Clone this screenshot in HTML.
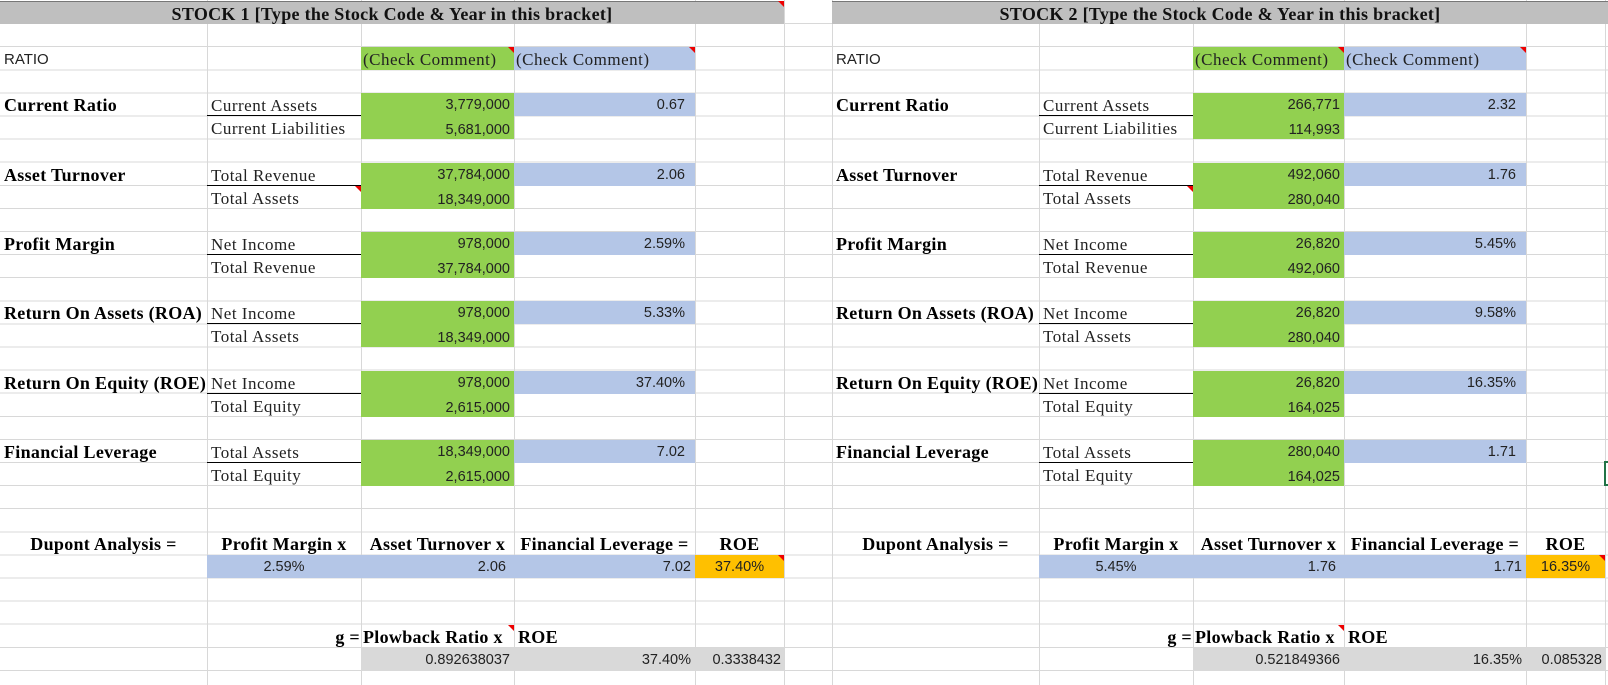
<!DOCTYPE html>
<html><head><meta charset="utf-8"><style>
*{margin:0;padding:0;box-sizing:border-box}
body{width:1608px;height:685px;overflow:hidden;background:#fff;position:relative;font-family:"Liberation Sans",sans-serif;font-size:14.5px;color:#222}
.grid{position:absolute;left:0;top:1px;width:1608px;height:684px;background:repeating-linear-gradient(to bottom,transparent 0,transparent 22.1px,#d8d8d8 22.1px,#d8d8d8 23.1px)}
.v{position:absolute;top:0;width:1px;height:685px;background:#d8d8d8}
.s{position:absolute;top:0;height:685px}
.c{position:absolute;height:23px;line-height:25px;padding:0 4px;white-space:nowrap;overflow:visible}
.sf{font-family:"Liberation Serif",serif;font-size:17px;letter-spacing:0.5px}
.b{font-family:"Liberation Serif",serif;font-size:18px;letter-spacing:0.3px;font-weight:bold;color:#000}
.r{text-align:right}.ctr{text-align:center}
.g{background:#92d050}.bl{background:#b4c6e7}.o{background:#ffc000}.gr{background:#d9d9d9}
.ul{border-bottom:1px solid #000}
.t{position:absolute;width:0;height:0;border-top:6px solid #e00;border-left:6px solid transparent}
.title{position:absolute;top:1px;height:23px;background:#bfbfbf;border-top:1px solid #777;text-align:center;font-family:"Liberation Serif",serif;font-weight:bold;font-size:18px;letter-spacing:0.3px;line-height:24px;color:#111}
</style></head><body>
<div class="grid"></div>
<div class="v" style="left:207px"></div><div class="v" style="left:361px"></div><div class="v" style="left:514px"></div><div class="v" style="left:695px"></div><div class="v" style="left:784px"></div><div class="v" style="left:832px"></div><div class="v" style="left:1039px"></div><div class="v" style="left:1193px"></div><div class="v" style="left:1344px"></div><div class="v" style="left:1526px"></div><div class="v" style="left:1605px"></div>

<div class="title" style="left:0;width:784px">STOCK 1 [Type the Stock Code &amp; Year in this bracket]</div>
<div class="t" style="left:778px;top:1px"></div>
<div class="title" style="left:832px;width:776px">STOCK 2 [Type the Stock Code &amp; Year in this bracket]</div>

<!-- LEFT -->
<div class="s" style="left:0;width:784px">
<div class="c" style="left:0;top:47px;font-size:15px">RATIO</div>
<div class="c g sf" style="left:361px;top:47px;width:153px;padding-left:2px">(Check Comment)</div>
<div class="c bl sf" style="left:514px;top:47px;width:181px;padding-left:2px">(Check Comment)</div>
<div class="t" style="left:508px;top:47px"></div><div class="t" style="left:689px;top:47px"></div>

<div class="c b" style="left:0;top:93px">Current Ratio</div>
<div class="c sf ul" style="left:207px;top:93px;width:154px">Current Assets</div>
<div class="c sf" style="left:207px;top:116px">Current Liabilities</div>
<div class="c g r" style="left:361px;top:93px;width:153px;height:46px">3,779,000<br>5,681,000</div>
<div class="c bl r" style="left:514px;top:93px;width:181px;padding-right:10px">0.67</div>

<div class="c b" style="left:0;top:163px">Asset Turnover</div>
<div class="c sf ul" style="left:207px;top:163px;width:154px">Total Revenue</div>
<div class="c sf" style="left:207px;top:186px">Total Assets</div>
<div class="t" style="left:355px;top:186px"></div>
<div class="c g r" style="left:361px;top:163px;width:153px;height:46px">37,784,000<br>18,349,000</div>
<div class="c bl r" style="left:514px;top:163px;width:181px;padding-right:10px">2.06</div>

<div class="c b" style="left:0;top:232px">Profit Margin</div>
<div class="c sf ul" style="left:207px;top:232px;width:154px">Net Income</div>
<div class="c sf" style="left:207px;top:255px">Total Revenue</div>
<div class="c g r" style="left:361px;top:232px;width:153px;height:46px">978,000<br>37,784,000</div>
<div class="c bl r" style="left:514px;top:232px;width:181px;padding-right:10px">2.59%</div>

<div class="c b" style="left:0;top:301px">Return On Assets (ROA)</div>
<div class="c sf ul" style="left:207px;top:301px;width:154px">Net Income</div>
<div class="c sf" style="left:207px;top:324px">Total Assets</div>
<div class="c g r" style="left:361px;top:301px;width:153px;height:46px">978,000<br>18,349,000</div>
<div class="c bl r" style="left:514px;top:301px;width:181px;padding-right:10px">5.33%</div>

<div class="c b" style="left:0;top:371px">Return On Equity (ROE)</div>
<div class="c sf ul" style="left:207px;top:371px;width:154px">Net Income</div>
<div class="c sf" style="left:207px;top:394px">Total Equity</div>
<div class="c g r" style="left:361px;top:371px;width:153px;height:46px">978,000<br>2,615,000</div>
<div class="c bl r" style="left:514px;top:371px;width:181px;padding-right:10px">37.40%</div>

<div class="c b" style="left:0;top:440px">Financial Leverage</div>
<div class="c sf ul" style="left:207px;top:440px;width:154px">Total Assets</div>
<div class="c sf" style="left:207px;top:463px">Total Equity</div>
<div class="c g r" style="left:361px;top:440px;width:153px;height:46px">18,349,000<br>2,615,000</div>
<div class="c bl r" style="left:514px;top:440px;width:181px;padding-right:10px">7.02</div>

<div class="c b ctr" style="left:0;top:532px;width:207px">Dupont Analysis =</div>
<div class="c b ctr" style="left:207px;top:532px;width:154px">Profit Margin x</div>
<div class="c b ctr" style="left:361px;top:532px;width:153px">Asset Turnover x</div>
<div class="c b ctr" style="left:514px;top:532px;width:181px">Financial Leverage =</div>
<div class="c b ctr" style="left:695px;top:532px;width:89px">ROE</div>
<div class="c bl ctr" style="left:207px;top:555px;width:154px">2.59%</div>
<div class="c bl r" style="left:361px;top:555px;width:153px;padding-right:8px">2.06</div>
<div class="c bl r" style="left:514px;top:555px;width:181px">7.02</div>
<div class="c o ctr" style="left:695px;top:555px;width:89px">37.40%</div>
<div class="t" style="left:778px;top:555px"></div>

<div class="c b r" style="left:207px;top:625px;width:154px;padding-right:1px">g =</div>
<div class="c b" style="left:361px;top:625px;width:153px;padding-left:2px">Plowback Ratio x</div>
<div class="t" style="left:508px;top:625px"></div>
<div class="c b" style="left:514px;top:625px">ROE</div>
<div class="c gr r" style="left:361px;top:648px;width:153px">0.892638037</div>
<div class="c gr r" style="left:514px;top:648px;width:181px">37.40%</div>
<div class="c gr r" style="left:695px;top:648px;width:89px;padding-right:3px">0.3338432</div>
</div>

<!-- RIGHT -->
<div class="s" style="left:832px;width:776px">
<div class="c" style="left:0;top:47px;font-size:15px">RATIO</div>
<div class="c g sf" style="left:361px;top:47px;width:151px;padding-left:2px">(Check Comment)</div>
<div class="c bl sf" style="left:512px;top:47px;width:182px;padding-left:2px">(Check Comment)</div>
<div class="t" style="left:506px;top:47px"></div><div class="t" style="left:688px;top:47px"></div>

<div class="c b" style="left:0;top:93px">Current Ratio</div>
<div class="c sf ul" style="left:207px;top:93px;width:154px">Current Assets</div>
<div class="c sf" style="left:207px;top:116px">Current Liabilities</div>
<div class="c g r" style="left:361px;top:93px;width:151px;height:46px">266,771<br>114,993</div>
<div class="c bl r" style="left:512px;top:93px;width:182px;padding-right:10px">2.32</div>

<div class="c b" style="left:0;top:163px">Asset Turnover</div>
<div class="c sf ul" style="left:207px;top:163px;width:154px">Total Revenue</div>
<div class="c sf" style="left:207px;top:186px">Total Assets</div>
<div class="t" style="left:355px;top:186px"></div>
<div class="c g r" style="left:361px;top:163px;width:151px;height:46px">492,060<br>280,040</div>
<div class="c bl r" style="left:512px;top:163px;width:182px;padding-right:10px">1.76</div>

<div class="c b" style="left:0;top:232px">Profit Margin</div>
<div class="c sf ul" style="left:207px;top:232px;width:154px">Net Income</div>
<div class="c sf" style="left:207px;top:255px">Total Revenue</div>
<div class="c g r" style="left:361px;top:232px;width:151px;height:46px">26,820<br>492,060</div>
<div class="c bl r" style="left:512px;top:232px;width:182px;padding-right:10px">5.45%</div>

<div class="c b" style="left:0;top:301px">Return On Assets (ROA)</div>
<div class="c sf ul" style="left:207px;top:301px;width:154px">Net Income</div>
<div class="c sf" style="left:207px;top:324px">Total Assets</div>
<div class="c g r" style="left:361px;top:301px;width:151px;height:46px">26,820<br>280,040</div>
<div class="c bl r" style="left:512px;top:301px;width:182px;padding-right:10px">9.58%</div>

<div class="c b" style="left:0;top:371px">Return On Equity (ROE)</div>
<div class="c sf ul" style="left:207px;top:371px;width:154px">Net Income</div>
<div class="c sf" style="left:207px;top:394px">Total Equity</div>
<div class="c g r" style="left:361px;top:371px;width:151px;height:46px">26,820<br>164,025</div>
<div class="c bl r" style="left:512px;top:371px;width:182px;padding-right:10px">16.35%</div>

<div class="c b" style="left:0;top:440px">Financial Leverage</div>
<div class="c sf ul" style="left:207px;top:440px;width:154px">Total Assets</div>
<div class="c sf" style="left:207px;top:463px">Total Equity</div>
<div class="c g r" style="left:361px;top:440px;width:151px;height:46px">280,040<br>164,025</div>
<div class="c bl r" style="left:512px;top:440px;width:182px;padding-right:10px">1.71</div>

<div class="c b ctr" style="left:0;top:532px;width:207px">Dupont Analysis =</div>
<div class="c b ctr" style="left:207px;top:532px;width:154px">Profit Margin x</div>
<div class="c b ctr" style="left:361px;top:532px;width:151px">Asset Turnover x</div>
<div class="c b ctr" style="left:512px;top:532px;width:182px">Financial Leverage =</div>
<div class="c b ctr" style="left:694px;top:532px;width:79px">ROE</div>
<div class="c bl ctr" style="left:207px;top:555px;width:154px">5.45%</div>
<div class="c bl r" style="left:361px;top:555px;width:151px;padding-right:8px">1.76</div>
<div class="c bl r" style="left:512px;top:555px;width:182px">1.71</div>
<div class="c o ctr" style="left:694px;top:555px;width:79px">16.35%</div>
<div class="t" style="left:767px;top:555px"></div>

<div class="c b r" style="left:207px;top:625px;width:154px;padding-right:1px">g =</div>
<div class="c b" style="left:361px;top:625px;width:151px;padding-left:2px">Plowback Ratio x</div>
<div class="t" style="left:506px;top:625px"></div>
<div class="c b" style="left:512px;top:625px">ROE</div>
<div class="c gr r" style="left:361px;top:648px;width:151px">0.521849366</div>
<div class="c gr r" style="left:512px;top:648px;width:182px">16.35%</div>
<div class="c gr r" style="left:694px;top:648px;width:79px;padding-right:3px">0.085328</div>
</div>
<div style="position:absolute;left:1604px;top:461px;width:4px;height:25px;border:2px solid #217346;border-right:none"></div>
</body></html>
